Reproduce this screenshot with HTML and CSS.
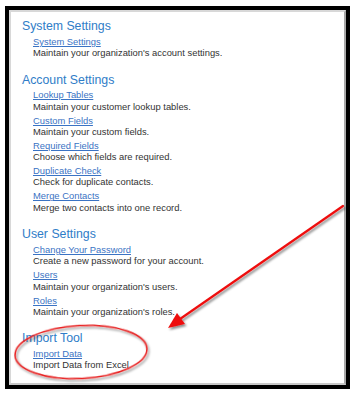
FILE: index.html
```html
<!DOCTYPE html>
<html lang="en">
<head>
  <meta charset="UTF-8" />
  <title>Settings</title>
  <link rel="stylesheet" href="styles.css">
</head>
<body>
  <div class="frame">
    <div class="panel">

      <!-- System Settings -->
      <div class="section">
        <h2>System Settings</h2>
        <div class="item">
          <a href="#">System Settings</a>
          <p>Maintain your organization's account settings.</p>
        </div>
      </div>

      <!-- Account Settings -->
      <div class="section">
        <h2>Account Settings</h2>
        <div class="item">
          <a href="#">Lookup Tables</a>
          <p>Maintain your customer lookup tables.</p>
        </div>
        <div class="item">
          <a href="#">Custom Fields</a>
          <p>Maintain your custom fields.</p>
        </div>
        <div class="item">
          <a href="#">Required Fields</a>
          <p>Choose which fields are required.</p>
        </div>
        <div class="item">
          <a href="#">Duplicate Check</a>
          <p>Check for duplicate contacts.</p>
        </div>
        <div class="item">
          <a href="#">Merge Contacts</a>
          <p>Merge two contacts into one record.</p>
        </div>
      </div>

      <!-- User Settings -->
      <div class="section">
        <h2>User Settings</h2>
        <div class="item">
          <a href="#">Change Your Password</a>
          <p>Create a new password for your account.</p>
        </div>
        <div class="item">
          <a href="#">Users</a>
          <p>Maintain your organization's users.</p>
        </div>
        <div class="item">
          <a href="#">Roles</a>
          <p>Maintain your organization's roles.</p>
        </div>
      </div>

      <!-- Import Tool -->
      <div class="section">
        <h2>Import Tool</h2>
        <div class="item">
          <a href="#">Import Data</a>
          <p>Import Data from Excel</p>
        </div>
      </div>

    </div>

    <!-- annotation: arrow + circle -->
    <svg class="marks" width="356" height="394" viewBox="0 0 356 394">
      <defs>
        <filter id="shadow" x="-20%" y="-20%" width="140%" height="140%">
          <feDropShadow dx="1.5" dy="2" stdDeviation="1.2" flood-color="#000" flood-opacity="0.45" />
        </filter>
      </defs>
      <g filter="url(#shadow)">
        <line x1="343" y1="206" x2="180" y2="319" stroke="#ee1111" stroke-width="2.2" stroke-linecap="round" />
        <polygon points="168,328 177,313 185,324" fill="#ee1111" />
        <ellipse cx="81" cy="352" rx="66" ry="26.5" fill="none" stroke="#e82020" stroke-width="1.5" transform="rotate(-3 81 352)" />
      </g>
    </svg>
  </div>
</body>
</html>
```

FILE: styles.css
```css
* { margin: 0; padding: 0; box-sizing: border-box; }
body {
  background-color: #fff;
  font-family: 'Liberation Sans', Arial, sans-serif;
}
.frame {
  position: relative;
  width: 345px;
  height: 383px;
  margin: 6px 0 0 5px;
  border: 4px solid #000;
  border-left-width: 4px;
  border-bottom-width: 4px;
}
.panel {
  height: 100%;
  border: 2px solid #d8d8d8;
  border-right-color: #a8a8a8;
  border-bottom-color: #c8c8c8;
  padding: 8px 0 0 11px;
  background-color: #fff;
}
.section { margin-bottom: 15.3px; }
.section h2 {
  font-size: 12.3px;
  line-height: 13px;
  font-weight: normal;
  color: #2f7dc8;
}
.item { margin-top: 2.7px; padding-left: 11px; }
.item a {
  display: block;
  font-size: 9.4px;
  line-height: 11.3px;
  color: #3a73c4;
  text-decoration: underline;
}
.item p {
  font-size: 9.4px;
  line-height: 11.3px;
  color: #333;
}
.marks {
  position: absolute;
  left: -9px;
  top: -10px;
  pointer-events: none;
}
```
